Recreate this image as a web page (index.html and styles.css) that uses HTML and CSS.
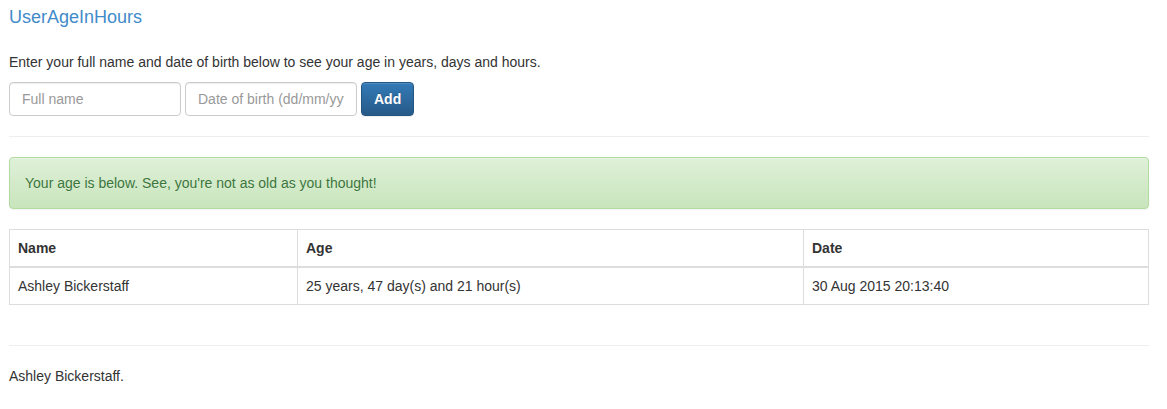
FILE: index.html
```html
<!DOCTYPE html>
<html>
<head>
<meta charset="utf-8">
<link rel="stylesheet" href="styles.css">
</head>
<body>
<div class="container">
  <a class="brand" href="#">UserAgeInHours</a>
  <p class="intro">Enter your full name and date of birth below to see your age in years, days and hours.</p>
  <form class="entry">
    <input class="field" type="text" placeholder="Full name">
    <input class="field" type="text" placeholder="Date of birth (dd/mm/yyyy)">
    <button class="btn" type="button">Add</button>
  </form>
  <hr class="rule">
  <div class="alert">Your age is below. See, you're not as old as you thought!</div>
  <table class="ages">
    <thead>
      <tr><th class="c1">Name</th><th class="c2">Age</th><th class="c3">Date</th></tr>
    </thead>
    <tbody>
      <tr><td>Ashley Bickerstaff</td><td>25 years, 47 day(s) and 21 hour(s)</td><td>30 Aug 2015 20:13:40</td></tr>
    </tbody>
  </table>
  <hr class="rule">
  <footer class="foot">Ashley Bickerstaff.</footer>
</div>
</body>
</html>
```

FILE: styles.css
```css
* { box-sizing: border-box; }
html, body { margin: 0; padding: 0; background: #fff; }
body {
  font-family: "Liberation Sans", Arial, Helvetica, sans-serif;
  font-size: 14px;
  line-height: 20px;
  color: #333;
}
.container {
  width: 1140px;
  margin-left: 9px;
  padding-top: 7px;
}
.brand {
  display: block;
  font-size: 18px;
  line-height: 20px;
  color: #428bca;
  text-decoration: none;
  height: 20px;
}
.intro {
  margin: 25px 0 10px;
}
.entry {
  display: flex;
  gap: 4px;
  margin: 0;
}
.field {
  width: 172px;
  height: 34px;
  padding: 6px 12px;
  font-family: inherit;
  font-size: 14px;
  color: #555;
  border: 1px solid #ccc;
  border-radius: 4px;
  box-shadow: inset 0 1px 1px rgba(0,0,0,.075);
  outline: none;
}
.field::placeholder { color: #999; }
.btn {
  height: 34px;
  padding: 6px 12px;
  font-family: inherit;
  font-size: 14px;
  font-weight: bold;
  color: #fff;
  border: 1px solid #245580;
  border-radius: 4px;
  background: linear-gradient(to bottom, #337ab7 0, #265a88 100%);
  box-shadow: inset 0 1px 0 rgba(255,255,255,.15), 0 1px 1px rgba(0,0,0,.075);
  text-shadow: 0 -1px 0 rgba(0,0,0,.2);
}
.rule {
  margin: 20px 0;
  border: 0;
  border-top: 1px solid #eee;
  height: 0;
}
.alert {
  padding: 15px;
  border: 1px solid #b2dba1;
  border-radius: 4px;
  color: #3c763d;
  background: linear-gradient(to bottom, #dff0d8 0, #c8e5bc 100%);
  box-shadow: inset 0 1px 0 rgba(255,255,255,.25), 0 1px 2px rgba(0,0,0,.05);
  text-shadow: 0 1px 0 rgba(255,255,255,.2);
  margin-bottom: 20px;
}
.ages {
  width: 100%;
  border-collapse: collapse;
  border: 1px solid #ddd;
  margin-bottom: 40px;
}
.ages th, .ages td {
  padding: 8px;
  text-align: left;
  border: 1px solid #ddd;
  line-height: 20px;
  vertical-align: top;
}
.ages thead th {
  border-bottom: 2px solid #ddd;
  font-weight: bold;
}
.c1 { width: 288px; }
.c2 { width: 506px; }
.foot { line-height: 20px; }
```
